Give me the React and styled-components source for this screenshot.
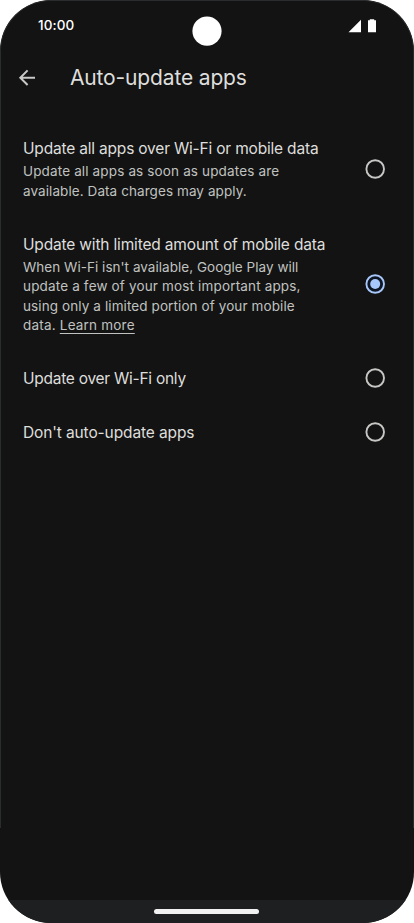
import React, { useState } from 'react';
import styled, { createGlobalStyle } from 'styled-components';

const GlobalStyle = createGlobalStyle`
  body {
    margin: 0;
    background: #fff;
  }
`;

const Phone = styled.div`
  position: relative;
  box-sizing: border-box;
  display: flex;
  flex-direction: column;
  width: 414px;
  height: 923px;
  overflow: hidden;
  border-radius: 51px;
  background: #131313;
  color: #dededc;
  font-family: Inter, Roboto, sans-serif;
`;

const Edge = styled.div`
  position: absolute;
  top: 0;
  left: 0;
  box-sizing: border-box;
  width: 414px;
  height: 828px;
  border: 1px solid #2b2c2d;
  border-bottom: 0;
  border-radius: 51px 51px 0 0;
  pointer-events: none;
`;

const Camera = styled.svg`
  position: absolute;
  top: 16px;
  left: 192px;
`;

const StatusBar = styled.div`
  display: flex;
  align-items: center;
  justify-content: space-between;
  height: 51px;
  padding: 0 38px;
  box-sizing: border-box;
`;

const Clock = styled.span`
  padding-bottom: 1px;
  color: #fff;
  font-size: 13.5px;
  font-weight: 500;
  letter-spacing: 0.1px;
`;

const Header = styled.header`
  display: flex;
  align-items: center;
  height: 53px;
  padding-left: 15px;
`;

const BackButton = styled.button`
  display: flex;
  padding: 0;
  border: 0;
  background: none;
  color: #c8c8c6;
`;

const Title = styled.h1`
  margin: 0 0 0 31px;
  font-size: 21px;
  font-weight: 400;
  letter-spacing: -0.15px;
  white-space: nowrap;
`;

const Options = styled.main`
  flex: 1;
  padding-top: 17px;
`;

const Option = styled.div`
  display: flex;
  align-items: center;
  justify-content: space-between;
  padding: 15px 29px 15px 23px;
`;

const Label = styled.div`
  padding-top: 1px;
  margin-bottom: -1px;
  font-size: 15.5px;
  line-height: 24px;
  letter-spacing: ${({ $spacing }) => $spacing || 0}px;
  white-space: nowrap;
`;

const Description = styled.div`
  padding: 2px 0 0.5px;
  color: #c0c2c0;
  font-size: 13.5px;
  line-height: 19.5px;
`;

const Line = styled.div`
  letter-spacing: ${({ $spacing }) => $spacing || 0}px;
  white-space: nowrap;
`;

const Link = styled.a`
  text-decoration: underline;
  text-underline-offset: 3px;
`;

const RadioIcon = styled.svg`
  display: block;
  flex: none;
  color: ${({ $checked }) => ($checked ? '#a8c7fa' : '#c7c7c5')};
`;

const NavBar = styled.div`
  display: flex;
  justify-content: center;
  align-items: flex-start;
  height: 23px;
  padding: 9px 1px 0 0;
  box-sizing: border-box;
  background: #1e1f20;
`;

const Pill = styled.div`
  width: 105px;
  height: 4.5px;
  border-radius: 3px;
  background: #f2f2f2;
`;

const Radio = ({ checked }) => (
  <RadioIcon $checked={checked} width="20" height="20" viewBox="0 0 20 20">
    <circle cx="10.2" cy="10" r="8.8" fill={checked ? '#0e1624' : 'none'} stroke="currentColor" strokeWidth="1.9" />
    {checked && <circle cx="10.2" cy="10" r="5" fill="currentColor" />}
  </RadioIcon>
);

const options = [
  {
    label: 'Update all apps over Wi-Fi or mobile data',
    spacing: -0.19,
    lines: [
      { text: 'Update all apps as soon as updates are', spacing: 0.145 },
      { text: 'available. Data charges may apply.', spacing: 0.08 },
    ],
  },
  {
    label: 'Update with limited amount of mobile data',
    spacing: -0.17,
    lines: [
      { text: "When Wi-Fi isn't available, Google Play will", spacing: 0.03 },
      { text: 'update a few of your most important apps,', spacing: 0.16 },
      { text: 'using only a limited portion of your mobile', spacing: 0.1 },
      { text: 'data. ', link: 'Learn more', spacing: 0.2 },
    ],
  },
  { label: 'Update over Wi-Fi only', spacing: -0.26 },
  { label: "Don't auto-update apps", spacing: -0.12 },
];

const App = () => {
  const [selected, setSelected] = useState(1);
  return (
    <>
      <GlobalStyle />
      <Phone>
        <StatusBar>
          <Clock>10:00</Clock>
          <svg width="28" height="14" viewBox="0 0 28 14" fill="#fff">
            <path d="M0.5 13.2 13 0.7V13.2z" />
            <path d="M20 1.3h1.8V0.3h4.4v1H28V13.2h-8z" />
          </svg>
        </StatusBar>
        <Header>
          <BackButton aria-label="Back">
            <svg width="24" height="24" viewBox="0 0 24 24" fill="none" stroke="currentColor" strokeWidth="2">
              <path d="M20 11.7H5.5M12.6 4.4 5.3 11.7l7.3 7.3" />
            </svg>
          </BackButton>
          <Title>Auto-update apps</Title>
        </Header>
        <Options>
          {options.map(({ label, spacing, lines }, index) => (
            <Option key={label} onClick={() => setSelected(index)}>
              <div>
                <Label $spacing={spacing}>{label}</Label>
                {lines && (
                  <Description>
                    {lines.map((line) => (
                      <Line key={line.text} $spacing={line.spacing}>
                        {line.text}
                        {line.link && <Link>{line.link}</Link>}
                      </Line>
                    ))}
                  </Description>
                )}
              </div>
              <Radio checked={index === selected} />
            </Option>
          ))}
        </Options>
        <NavBar>
          <Pill />
        </NavBar>
        <Edge />
        <Camera width="30" height="30" viewBox="0 0 30 30">
          <circle cx="15" cy="15.1" r="14.6" fill="#fff" />
        </Camera>
      </Phone>
    </>
  );
};

export default App;
